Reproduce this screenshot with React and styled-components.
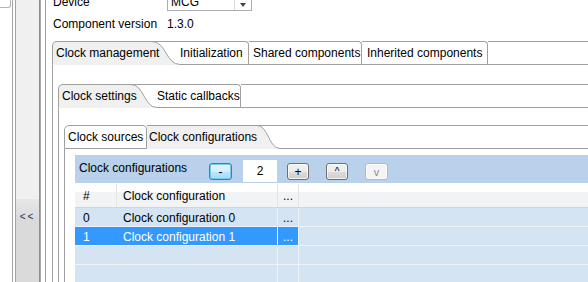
import React from 'react'
import styled, { createGlobalStyle } from 'styled-components'

const LINE = '#a0a0a0'
const COLS = '42px 161px 21px 1fr'

const GlobalStyle = createGlobalStyle`
  html, body {
    margin: 0;
    padding: 0;
    background: #fff;
    overflow: hidden;
  }
  body {
    font-family: "Liberation Sans", Arial, sans-serif;
    font-size: 12px;
    color: #000;
  }
`

const Screen = styled.div`
  width: 588px;
  height: 282px;
  overflow: hidden;
  display: flex;
  background: #fff;
`
const LeftStub = styled.div`
  width: 12px;
  flex-shrink: 0;
`
const StubCorner = styled.div`
  width: 10px;
  height: 7px;
  border-right: 1px solid #b4b4b4;
  border-bottom: 1px solid #b4b4b4;
  border-bottom-right-radius: 3px;
`
const Sash = styled.div`
  width: 2px;
  flex-shrink: 0;
  border-left: 1px solid #a4a4a4;
  border-right: 1px solid #a4a4a4;
`
const SidePanel = styled.div`
  width: 23px;
  flex-shrink: 0;
  background: #f0f0f0;
  border-right: 1px solid #8e8e8e;
  display: flex;
  flex-direction: column;
`
const CollapseButton = styled.div`
  margin-top: 199px;
  flex: 1;
  background: linear-gradient(#e7e7e7, #dadada 25%);
  display: flex;
  justify-content: center;
  padding-top: 12px;
  font-size: 10px;
  line-height: 12px;
  color: #1b2a55;
  letter-spacing: 2px;
`
const Editor = styled.div`
  flex: 1;
  min-width: 0;
  display: flex;
  border-left: 1px solid #a8a8a8;
  padding-left: 4px;
`
const EditorInner = styled.div`
  flex: 1;
  min-width: 0;
  display: flex;
  flex-direction: column;
  border-left: 1px solid ${LINE};
  padding-left: 6px;
`
const Form = styled.div`
  display: grid;
  grid-template-columns: 114px 1fr;
  row-gap: 6px;
  align-items: center;
  margin-top: -7px;
  padding-left: 1px;
  line-height: 14px;
`
const Combo = styled.div`
  box-sizing: border-box;
  width: 85px;
  height: 18px;
  border: 1px solid #abadb3;
  display: flex;
  background: #fff;
`
const ComboText = styled.div`
  flex: 1;
  padding-left: 3px;
  line-height: 16px;
`
const ComboButton = styled.div`
  width: 16px;
  border-left: 1px solid #dadada;
  display: flex;
  align-items: center;
  justify-content: center;
  &::after {
    content: '';
    border-left: 3px solid transparent;
    border-right: 3px solid transparent;
    border-top: 4px solid #444;
    margin-top: 6px;
  }
`

const Folder = styled.div`
  flex: 1;
  min-width: 0;
  min-height: 0;
  display: flex;
  flex-direction: column;
  margin-top: ${p => p.$mt || 0}px;
`
const TabStrip = styled.div`
  display: flex;
  height: 24px;
  flex-shrink: 0;
`
const Tab = styled.div`
  box-sizing: border-box;
  width: ${p => p.$w}px;
  height: 24px;
  flex-shrink: 0;
  display: flex;
  align-items: center;
  white-space: nowrap;
  padding: 0 0 0 ${p => p.$pl}px;
  border-top: 1px solid ${LINE};
  border-bottom: 1px solid ${p => (p.$active ? 'transparent' : LINE)};
  background: ${p => (p.$active ? '#f0f0f0' : '#fff')};
  border-left: ${p => (p.$first ? `1px solid ${LINE}` : 'none')};
  border-top-left-radius: ${p => (p.$first ? 5 : 0)}px;
  border-right: ${p => (p.$sep ? `1px solid ${LINE}` : 'none')};
  border-top-right-radius: ${p => (p.$sep ? 4 : 0)}px;
`
const TabLabel = styled.span`
  position: relative;
  z-index: 1;
`
const StripFiller = styled.div`
  flex: 1;
  border-top: 1px solid ${LINE};
  border-bottom: 1px solid ${LINE};
`
const CurveSvg = styled.svg`
  display: block;
  flex-shrink: 0;
`
const FolderBody = styled.div`
  flex: 1;
  min-height: 0;
  min-width: 0;
  display: flex;
  flex-direction: column;
  border-left: 1px solid ${LINE};
  padding: ${p => p.$pt}px 0 0 ${p => p.$pl}px;
`

const TablePane = styled.div`
  flex: 1;
  min-height: 0;
  display: flex;
  flex-direction: column;
`
const Toolbar = styled.div`
  height: 28px;
  flex-shrink: 0;
  background: #b9d1ea;
  display: flex;
  align-items: flex-start;
  padding-left: 4px;
  margin-bottom: 1px;
`
const ToolbarTitle = styled.div`
  width: 130px;
  line-height: 27px;
  white-space: nowrap;
`
const ToolButton = styled.div`
  box-sizing: border-box;
  width: ${p => p.$w}px;
  height: 17px;
  margin: 8px 0 0 ${p => p.$ml}px;
  border-radius: 3px;
  border: 1px solid ${p => (p.$focused ? '#3c7fb1' : p.$disabled ? '#b5b9bc' : '#707070')};
  background: ${p =>
    p.$focused
      ? 'linear-gradient(#e5f4fc, #d4eefb 50%, #bee6fd 50%, #a7d9f5)'
      : p.$disabled
        ? '#f4f4f4'
        : 'linear-gradient(#f2f2f2, #ebebeb 50%, #dddddd 50%, #cfcfcf)'};
  box-shadow: inset 0 0 0 1px ${p => (p.$focused ? '#6fcdf5' : 'rgba(255,255,255,0.7)')};
  color: ${p => (p.$disabled ? '#8c8c8c' : '#000')};
  display: flex;
  align-items: center;
  justify-content: center;
  font-size: ${p => p.$fs || 12}px;
  line-height: 12px;
`
const CountField = styled.div`
  box-sizing: border-box;
  width: 34px;
  height: 22px;
  margin: 5px 0 0 11px;
  background: #fff;
  display: flex;
  align-items: center;
  justify-content: center;
`
const HeaderRow = styled.div`
  display: grid;
  grid-template-columns: ${COLS};
  height: 24px;
  box-sizing: border-box;
  flex-shrink: 0;
  border-bottom: 1px solid #d5d5d5;
  background: linear-gradient(#fff 0, #fff 36%, #f2f3f5 36%, #f2f3f5 100%);
`
const HeaderCell = styled.div`
  display: flex;
  align-items: center;
  white-space: nowrap;
  padding-left: ${p => p.$pl}px;
  border-right: ${p => (p.$sep ? '1px solid #e2e4e8' : 'none')};
`
const Row = styled.div`
  display: grid;
  grid-template-columns: ${COLS};
  height: 19px;
  box-sizing: border-box;
  flex-shrink: 0;
  border-bottom: 1px solid #eef3f9;
  background: #d5e4f3;
`
const Cell = styled.div`
  display: flex;
  align-items: center;
  white-space: nowrap;
  padding: 1px 0 0 ${p => p.$pl}px;
  background: ${p => (p.$selected ? '#3399ff' : 'transparent')};
  color: ${p => (p.$selected ? '#fff' : '#000')};
  border-right: ${p => (p.$sep ? '1px solid #eef3f9' : 'none')};
`

function TabCurve({ width }) {
  const h = 24
  const c = `M0 0.5 C${width * 0.5} 0.5 ${width * 0.5} ${h - 0.5} ${width} ${h - 0.5}`
  return (
    <CurveSvg width={width} height={h} viewBox={`0 0 ${width} ${h}`}>
      <path d={`${c} L${width} 0 Z`} fill="#fff" />
      <path d={`${c} L${width} ${h} L0 ${h} Z`} fill="#f0f0f0" />
      <path d={c} fill="none" stroke={LINE} />
      <path d={`M0 0.5 H${width}`} stroke={LINE} />
    </CurveSvg>
  )
}

// each tab: width (to its separator), text padding, curve width if selected
function Tabs({ tabs }) {
  return (
    <TabStrip>
      {tabs.map((t, i) => (
        <React.Fragment key={t.label}>
          <Tab $w={t.w} $pl={t.pl} $first={i === 0} $sep={t.sep} $active={t.active}>
            <TabLabel>{t.label}</TabLabel>
          </Tab>
          {t.active && <TabCurve width={t.curve} />}
        </React.Fragment>
      ))}
      <StripFiller />
    </TabStrip>
  )
}

const mainTabs = [
  { label: 'Clock management', w: 100, pl: 3, active: true, curve: 28 },
  { label: 'Initialization', w: 69, pl: 0, sep: true },
  { label: 'Shared components', w: 113, pl: 4, sep: true },
  { label: 'Inherited components', w: 126, pl: 5, sep: true },
]
const settingsTabs = [
  { label: 'Clock settings', w: 73, pl: 3, active: true, curve: 26 },
  { label: 'Static callbacks', w: 84, pl: 0, sep: true },
]
const clockTabs = [
  { label: 'Clock sources', w: 83, pl: 3, sep: true },
  { label: 'Clock configurations', w: 110, pl: 2, active: true, curve: 23 },
]

const configs = [
  { id: '0', name: 'Clock configuration 0' },
  { id: '1', name: 'Clock configuration 1', selected: true },
  { id: '', name: '' },
  { id: '', name: '' },
]

function ConfigTable() {
  return (
    <TablePane>
      <Toolbar>
        <ToolbarTitle>Clock configurations</ToolbarTitle>
        <ToolButton $w={23} $ml={0} $focused>-</ToolButton>
        <CountField>2</CountField>
        <ToolButton $w={22} $ml={10}>+</ToolButton>
        <ToolButton $w={22} $ml={17} $fs={10}>^</ToolButton>
        <ToolButton $w={23} $ml={17} $fs={11} $disabled>v</ToolButton>
      </Toolbar>
      <HeaderRow>
        <HeaderCell $pl={8} $sep>#</HeaderCell>
        <HeaderCell $pl={6} $sep>Clock configuration</HeaderCell>
        <HeaderCell $pl={5} $sep>...</HeaderCell>
        <HeaderCell $pl={0} />
      </HeaderRow>
      {configs.map((c, i) => (
        <Row key={i}>
          <Cell $pl={8} $selected={c.selected}>{c.id}</Cell>
          <Cell $pl={6} $sep $selected={c.selected}>{c.name}</Cell>
          <Cell $pl={5} $sep $selected={c.selected}>{c.id !== '' ? '...' : ''}</Cell>
          <Cell $pl={0} />
        </Row>
      ))}
    </TablePane>
  )
}

export default function App() {
  return (
    <>
      <GlobalStyle />
      <Screen>
        <LeftStub>
          <StubCorner />
        </LeftStub>
        <Sash />
        <SidePanel>
          <CollapseButton>&lt;&lt;</CollapseButton>
        </SidePanel>
        <Editor>
          <EditorInner>
            <Form>
              <div>Device</div>
              <Combo>
                <ComboText>MCG</ComboText>
                <ComboButton />
              </Combo>
              <div>Component version</div>
              <div>1.3.0</div>
            </Form>
            <Folder $mt={10}>
              <Tabs tabs={mainTabs} />
              <FolderBody $pt={19} $pl={5}>
                <Folder>
                  <Tabs tabs={settingsTabs} />
                  <FolderBody $pt={17} $pl={5}>
                    <Folder>
                      <Tabs tabs={clockTabs} />
                      <FolderBody $pt={6} $pl={10}>
                        <ConfigTable />
                      </FolderBody>
                    </Folder>
                  </FolderBody>
                </Folder>
              </FolderBody>
            </Folder>
          </EditorInner>
        </Editor>
      </Screen>
    </>
  )
}
